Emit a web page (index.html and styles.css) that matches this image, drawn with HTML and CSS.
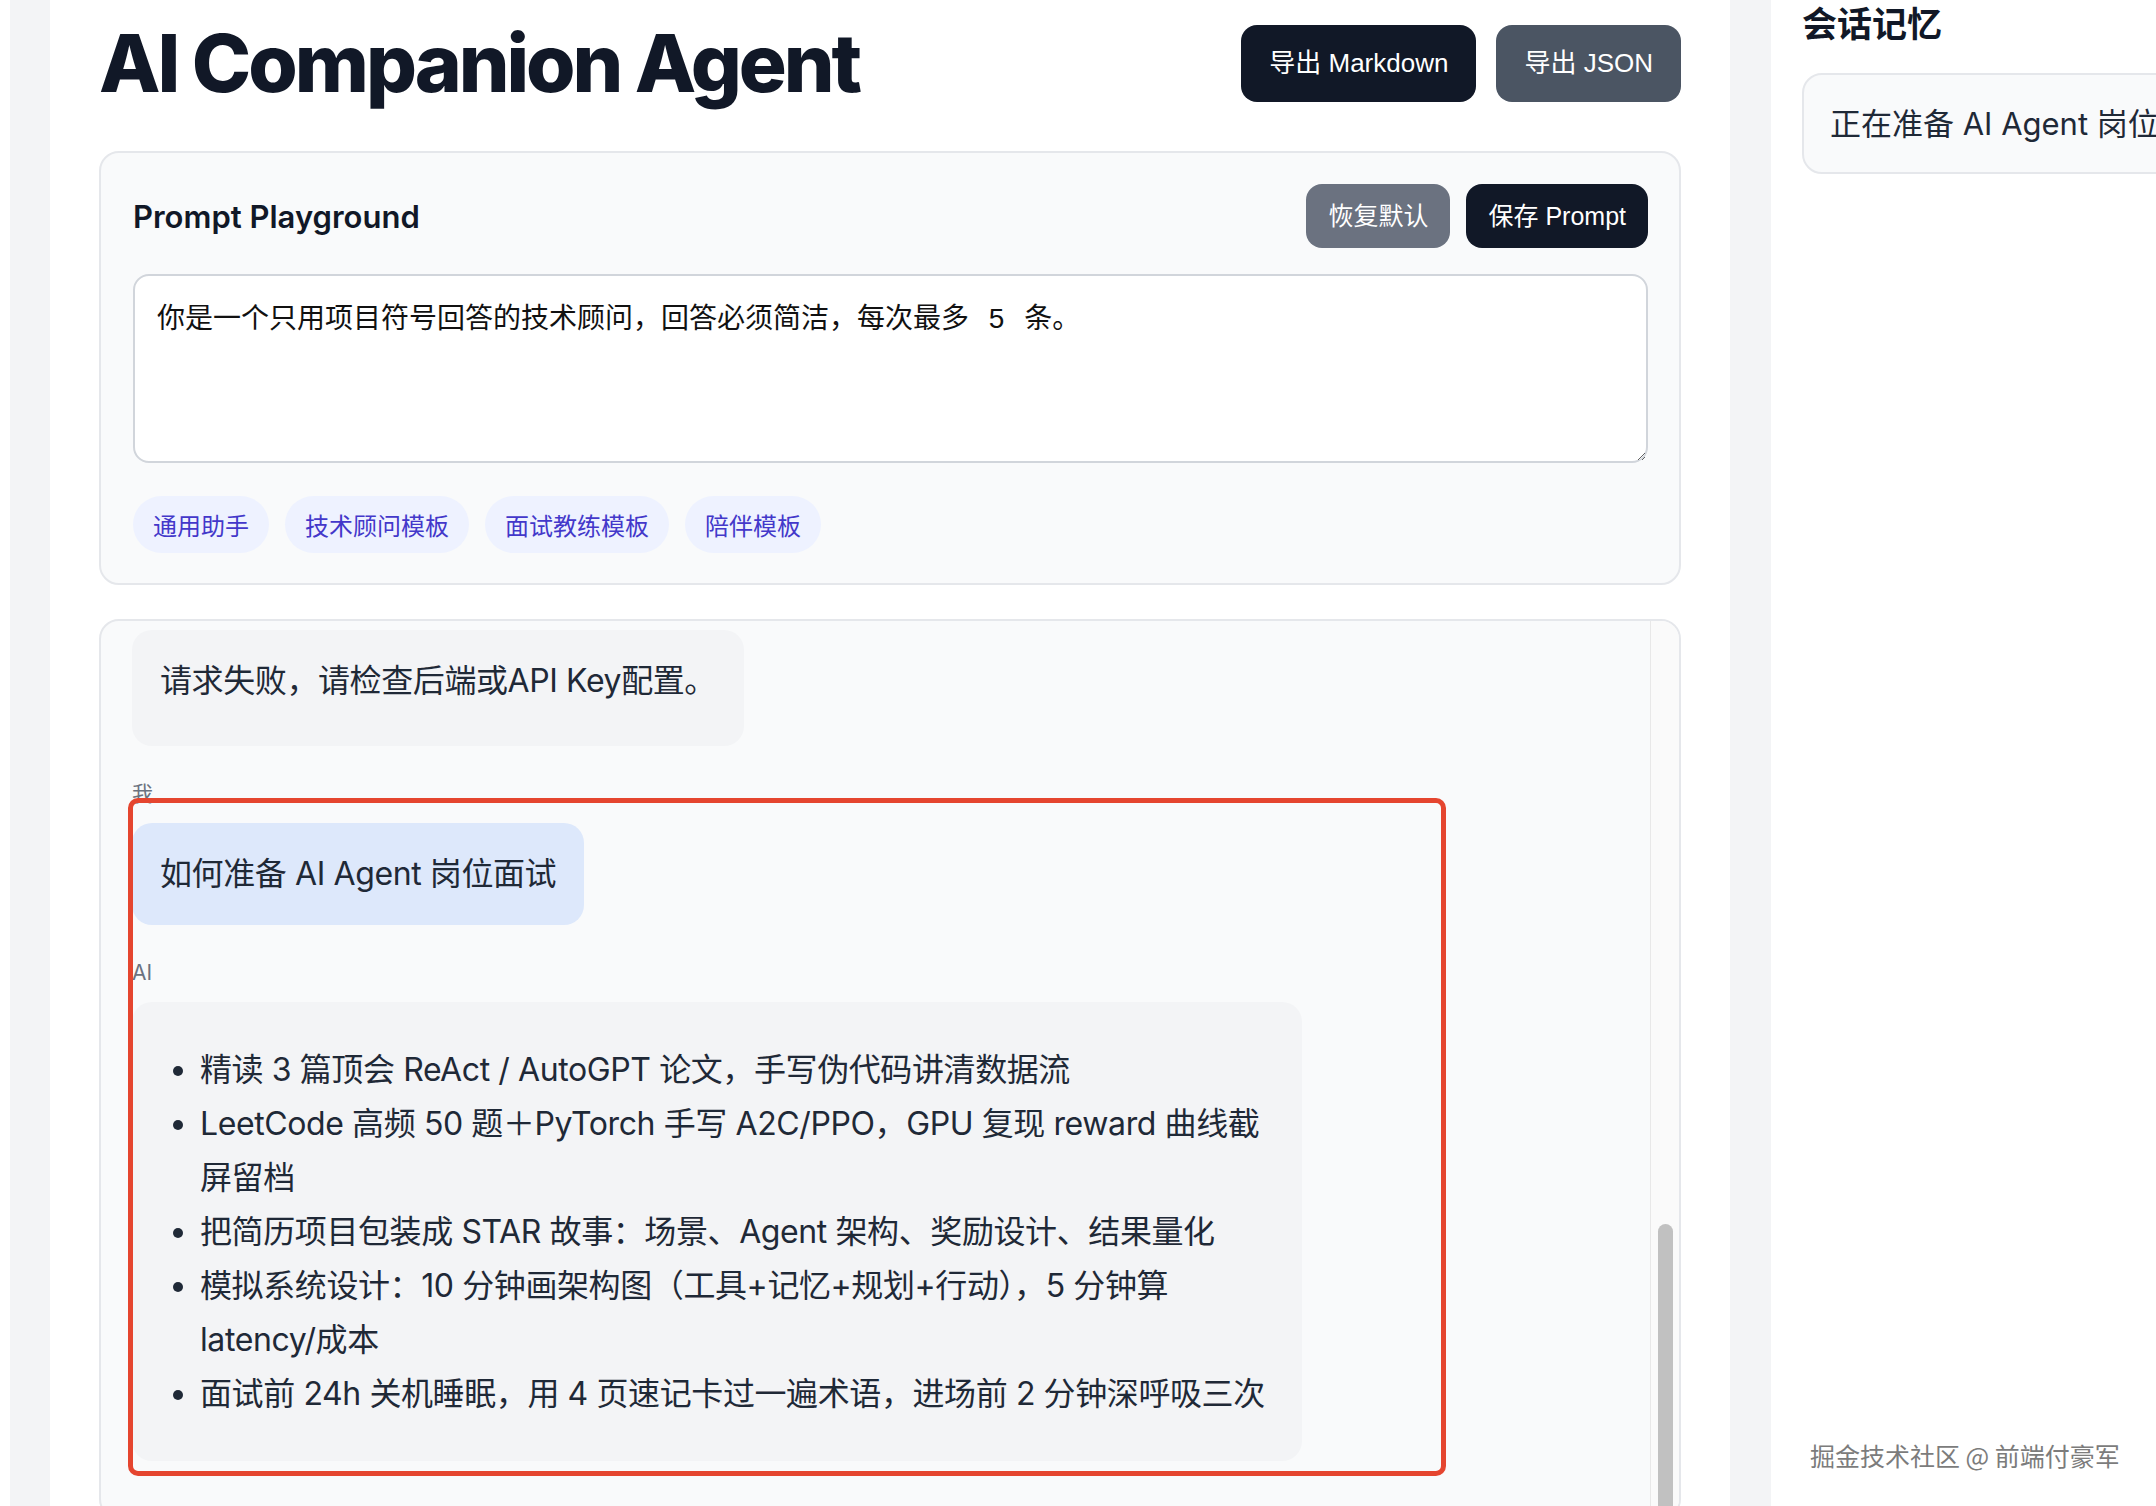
FILE: index.html
```html
<!DOCTYPE html>
<html lang="zh-CN">
<head>
<meta charset="utf-8">
<title>AI Companion Agent</title>
<link rel="stylesheet" href="styles.css">
</head>
<body>
<div class="app">
  <aside class="stub"></aside>

  <main class="main">
    <header class="topbar">
      <h1 class="title">AI Companion Agent</h1>
      <div class="actions">
        <button class="btn btn-lg btn-dark">导出 Markdown</button>
        <button class="btn btn-lg btn-slate">导出 JSON</button>
      </div>
    </header>

    <section class="card prompt-card">
      <div class="card-head">
        <h2 class="card-title">Prompt Playground</h2>
        <div class="card-actions">
          <button class="btn btn-md btn-gray">恢复默认</button>
          <button class="btn btn-md btn-dark">保存 Prompt</button>
        </div>
      </div>
      <textarea class="prompt-input">你是一个只用项目符号回答的技术顾问，回答必须简洁，每次最多 5 条。</textarea>
      <div class="chips">
        <button class="chip">通用助手</button>
        <button class="chip">技术顾问模板</button>
        <button class="chip">面试教练模板</button>
        <button class="chip">陪伴模板</button>
      </div>
    </section>

    <section class="card chat-card">
      <div class="messages">
        <div class="msg">
          <div class="bubble bubble-ai bubble-error">请求失败，请检查后端或API Key配置。</div>
        </div>
        <div class="msg">
          <div class="who">我</div>
          <div class="bubble bubble-user">如何准备 AI Agent 岗位面试</div>
        </div>
        <div class="msg">
          <div class="who">AI</div>
          <div class="bubble bubble-ai bubble-list">
            <ul>
              <li>精读 3 篇顶会 ReAct / AutoGPT 论文，手写伪代码讲清数据流</li>
              <li>LeetCode 高频 50 题＋PyTorch 手写 A2C/PPO，GPU 复现 reward 曲线截屏留档</li>
              <li>把简历项目包装成 STAR 故事：场景、Agent 架构、奖励设计、结果量化</li>
              <li>模拟系统设计：10 分钟画架构图（工具+记忆+规划+行动），5 分钟算 latency/成本</li>
              <li>面试前 24h 关机睡眠，用 4 页速记卡过一遍术语，进场前 2 分钟深呼吸三次</li>
            </ul>
          </div>
        </div>
      </div>
      <div class="scroll-track"><div class="scroll-thumb"></div></div>
    </section>
  </main>

  <aside class="memory">
    <h2 class="memory-title">会话记忆</h2>
    <div class="memory-card">正在准备 AI Agent 岗位面试</div>
  </aside>

  <div class="highlight"></div>
  <div class="watermark">掘金技术社区 @ 前端付豪军</div>
</div>
</body>
</html>
```

FILE: styles.css
```css
* { box-sizing: border-box; }

html, body { margin: 0; padding: 0; }

body {
  width: 2156px;
  height: 1506px;
  overflow: hidden;
  background: #f3f4f6;
  font-family: Inter, "Noto Sans CJK SC", sans-serif;
  color: #111827;
}

.app {
  position: relative;
  display: flex;
  height: 1506px;
}

.stub {
  flex: none;
  width: 10px;
  background: #ffffff;
}

.main {
  flex: none;
  width: 1680px;
  margin-left: 40px;
  background: #ffffff;
  padding: 23px 49px 0;
}

/* header */
.topbar {
  display: flex;
  justify-content: space-between;
  align-items: center;
  margin-bottom: 48px;
}

.title {
  margin: 0;
  font-family: Inter, "Noto Sans CJK SC", sans-serif;
  font-size: 80px;
  line-height: 80px;
  font-weight: 800;
  letter-spacing: -0.038em;
  color: #111827;
}

.actions, .card-actions {
  display: flex;
  align-items: center;
}

.actions { gap: 20px; }
.card-actions { gap: 16px; }

.btn {
  border: none;
  color: #ffffff;
  font-family: "Liberation Sans", Arial, "Noto Sans CJK SC", sans-serif;
  font-weight: 400;
  cursor: pointer;
}

.btn-lg {
  font-size: 26px;
  line-height: 37px;
  padding: 20px 28px;
  border-radius: 16px;
}

.btn-md {
  font-size: 25px;
  line-height: 36px;
  padding: 14px 22px;
  border-radius: 16px;
}

.btn-dark { background: #111827; }
.btn-slate { background: #4b5563; }
.btn-gray { background: #6b7280; }

/* cards */
.card {
  background: #f9fafb;
  border: 2px solid #e5e7eb;
  border-radius: 20px;
}

.prompt-card {
  padding: 31px 31px 30px 32px;
}

.card-head {
  display: flex;
  justify-content: space-between;
  align-items: center;
  height: 64px;
}

.card-title {
  margin: 0;
  font-size: 31px;
  font-weight: 600;
  color: #111827;
}

.prompt-input {
  display: block;
  width: 100%;
  height: 189px;
  margin-top: 26px;
  padding: 22px;
  border: 2px solid #d1d5db;
  border-radius: 16px;
  background: #ffffff;
  font-family: "Liberation Sans", Arial, "Noto Sans CJK SC", sans-serif;
  font-size: 28px;
  line-height: 1.5;
  word-spacing: 12px;
  color: #111111;
  resize: vertical;
}

.chips {
  display: flex;
  gap: 16px;
  margin-top: 33px;
}

.chip {
  border: none;
  border-radius: 999px;
  background: #eef2ff;
  color: #4338ca;
  font-family: "Noto Sans CJK SC", sans-serif;
  font-size: 24px;
  line-height: 29px;
  padding: 14px 20px;
}

/* chat */
.chat-card {
  margin-top: 34px;
  height: 900px;
  display: flex;
  overflow: hidden;
}

.messages {
  flex: 1;
  padding: 9px 33px 0 31px;
  display: flex;
  flex-direction: column;
  gap: 31px;
}

.msg {
  display: flex;
  flex-direction: column;
  align-items: flex-start;
}

.who {
  font-size: 21px;
  line-height: 33px;
  color: #6b7280;
  margin-bottom: 13px;
}

.bubble {
  font-size: 32px;
  line-height: 54px;
  letter-spacing: -0.4px;
  color: #1f2937;
  padding: 24px 28px;
  border-radius: 20px;
}

.bubble-ai { background: #f3f4f6; }
.bubble-user { background: #dde8fb; }

.bubble-error { padding-bottom: 38px; }

.bubble-list {
  max-width: 1170px;
  padding-top: 24px;
  padding-bottom: 24px;
}

.bubble-list ul {
  margin: 17px 0 16px;
  padding-left: 40px;
}

.scroll-track {
  flex: none;
  width: 29px;
  border-left: 1px solid #e8e8e8;
  background: #fafafa;
}

.scroll-thumb {
  width: 15px;
  height: 400px;
  margin: 603px auto 0;
  border-radius: 8px;
  background: #c1c1c1;
}

/* memory panel */
.memory {
  flex: none;
  width: 600px;
  margin-left: 41px;
  background: #ffffff;
  padding: 3px 0 0 31px;
}

.memory-title {
  margin: 0;
  font-size: 35px;
  line-height: 42px;
  font-weight: 700;
  color: #111827;
}

.memory-card {
  margin-top: 28px;
  padding: 21px 26px;
  background: #f9fafb;
  border: 2px solid #e5e7eb;
  border-radius: 20px;
  font-size: 31px;
  line-height: 55px;
  color: #1f2937;
  white-space: nowrap;
}

/* overlays */
.highlight {
  position: absolute;
  left: 128px;
  top: 798px;
  width: 1318px;
  height: 678px;
  border: 5px solid #e5452f;
  border-radius: 10px;
  pointer-events: none;
}

.watermark {
  position: absolute;
  left: 1810px;
  top: 1439px;
  font-family: "Noto Sans CJK SC", sans-serif;
  font-size: 25px;
  line-height: 32px;
  color: #7c7c7c;
  text-shadow: 0 0 2px #ffffff, 0 0 1px #ffffff;
  white-space: nowrap;
}
```
